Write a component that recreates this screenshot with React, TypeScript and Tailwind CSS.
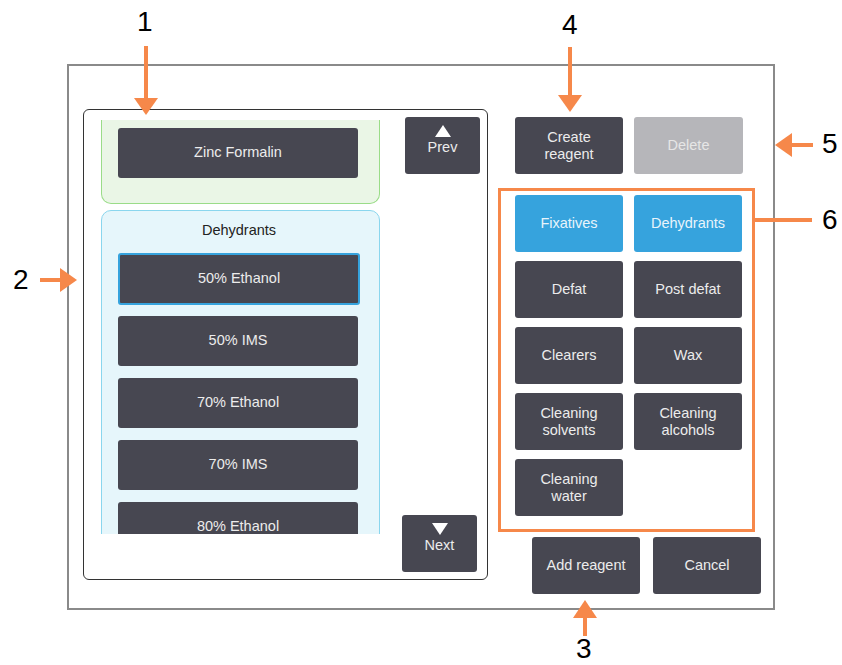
import React from "react";

const dark = "bg-[#474751] text-[#ececec]";

const reagents = ["50% IMS", "70% Ethanol", "70% IMS", "80% Ethanol"];

const groups = [
  { label: "Fixatives", active: true },
  { label: "Dehydrants", active: true },
  { label: "Defat" },
  { label: "Post defat" },
  { label: "Clearers" },
  { label: "Wax" },
  { label: "Cleaning\nsolvents" },
  { label: "Cleaning\nalcohols" },
  { label: "Cleaning\nwater" },
];

const App = () => {
  return (
    <div
      className="relative w-[842px] h-[665px] bg-white overflow-hidden text-[14.5px]"
      style={{ fontFamily: '"Liberation Sans", Arial, sans-serif' }}
    >
      {/* screen frame */}
      <div className="ml-[67px] mt-[64px] w-[708px] h-[546px] border-2 border-[#8a8a8a] flex pl-[14px] pt-[43px]">
        {/* reagent list panel */}
        <div className="w-[405px] h-[471px] border-[1.5px] border-[#333] rounded-[6px] flex">
          <div className="ml-[17px] mt-[10px] w-[279px] h-[414px] overflow-hidden flex flex-col">
            <div className="bg-[#eaf6e6] border border-t-0 border-[#9adc88] rounded-b-[10px] pt-[8px] pb-[25px] pl-[16px]">
              <div className={`${dark} w-[240px] h-[50px] rounded-[3px] flex items-center justify-center`}>
                Zinc Formalin
              </div>
            </div>
            <div className="mt-[6px] bg-[#e6f6fb] border border-[#8ad6ee] rounded-[10px] pl-[16px] pt-[10px] flex-1">
              <div className="w-[242px] text-center text-[#222] leading-[18px] mb-[14px]">Dehydrants</div>
              <div className={`${dark} w-[242px] h-[52px] rounded-[3px] border-2 border-[#36a3dd] flex items-center justify-center mb-[11px]`}>
                50% Ethanol
              </div>
              {reagents.map((r) => (
                <div
                  key={r}
                  className={`${dark} w-[240px] h-[50px] rounded-[3px] flex items-center justify-center mb-[12px]`}
                >
                  {r}
                </div>
              ))}
            </div>
          </div>
          <div className="ml-auto mr-[7px] py-[7px] flex flex-col justify-between">
            <div className={`${dark} w-[75px] h-[57px] rounded-[3px] flex flex-col items-center pt-[8px] -ml-[3px]`}>
              <div className="w-0 h-0 border-l-[8px] border-r-[8px] border-b-[12px] border-l-transparent border-r-transparent border-b-white" />
              <div className="leading-[18px] mt-[1px]">Prev</div>
            </div>
            <div className={`${dark} w-[75px] h-[57px] rounded-[3px] flex flex-col items-center pt-[8px] -ml-[6px]`}>
              <div className="w-0 h-0 border-l-[8px] border-r-[8px] border-t-[12px] border-l-transparent border-r-transparent border-t-white" />
              <div className="leading-[18px] mt-[1px]">Next</div>
            </div>
          </div>
        </div>

        {/* right side */}
        <div className="ml-[10px] flex flex-col">
          <div className="flex gap-[11px] pl-[17px] mt-[8px]">
            <div className={`${dark} w-[108px] h-[57px] rounded-[3px] flex items-center justify-center text-center leading-[17px]`}>
              Create
              <br />
              reagent
            </div>
            <div className="bg-[#b6b6ba] text-[#e6e6e6] w-[109px] h-[57px] rounded-[3px] flex items-center justify-center">
              Delete
            </div>
          </div>
          <div className="mt-[14px] w-[257px] h-[344px] border-[3px] border-[#f6884a] pl-[14px] pt-[4px]">
            <div className="grid grid-cols-[108px_108px] gap-x-[11px] gap-y-[9px]">
              {groups.map((g) => (
                <div
                  key={g.label}
                  className={`${g.active ? "bg-[#36a3dd] text-[#e8f4fb]" : dark} h-[57px] rounded-[3px] flex items-center justify-center text-center leading-[17px] whitespace-pre-line`}
                >
                  {g.label}
                </div>
              ))}
            </div>
          </div>
          <div className="flex gap-[13px] pl-[34px] mt-[5px]">
            <div className={`${dark} w-[108px] h-[57px] rounded-[3px] flex items-center justify-center`}>
              Add reagent
            </div>
            <div className={`${dark} w-[108px] h-[57px] rounded-[3px] flex items-center justify-center`}>
              Cancel
            </div>
          </div>
        </div>
      </div>

      {/* callouts */}
      <span className="absolute left-[137px] top-[5px] text-[28px] leading-[34px] text-black">1</span>
      <svg className="absolute left-[134px] top-[46px]" width="24" height="70" viewBox="0 0 24 70">
        <rect x="10" y="0" width="4" height="54" fill="#f6884a" />
        <polygon points="0,52 24,52 12,69" fill="#f6884a" />
      </svg>

      <span className="absolute left-[13px] top-[263px] text-[28px] leading-[34px] text-black">2</span>
      <svg className="absolute left-[40px] top-[268px]" width="37" height="24" viewBox="0 0 37 24">
        <rect x="0" y="10" width="22" height="4" fill="#f6884a" />
        <polygon points="20,0 20,24 37,12" fill="#f6884a" />
      </svg>

      <span className="absolute left-[576px] top-[637px] text-[28px] leading-[24px] text-black">3</span>
      <svg className="absolute left-[573px] top-[600px]" width="24" height="36" viewBox="0 0 24 36">
        <polygon points="12,0 0,18 24,18" fill="#f6884a" />
        <rect x="10" y="16" width="4" height="20" fill="#f6884a" />
      </svg>

      <span className="absolute left-[562px] top-[8px] text-[28px] leading-[34px] text-black">4</span>
      <svg className="absolute left-[558px] top-[47px]" width="24" height="66" viewBox="0 0 24 66">
        <rect x="10" y="0" width="4" height="50" fill="#f6884a" />
        <polygon points="0,48 24,48 12,65" fill="#f6884a" />
      </svg>

      <span className="absolute left-[822px] top-[127px] text-[28px] leading-[34px] text-black">5</span>
      <svg className="absolute left-[775px] top-[133px]" width="38" height="24" viewBox="0 0 38 24">
        <polygon points="0,12 17,0 17,24" fill="#f6884a" />
        <rect x="15" y="10" width="23" height="4" fill="#f6884a" />
      </svg>

      <span className="absolute left-[822px] top-[203px] text-[28px] leading-[34px] text-black">6</span>
      <div className="absolute left-[755px] top-[218px] w-[57px] h-[4px] bg-[#f6884a]" />
    </div>
  );
};

export default App;
